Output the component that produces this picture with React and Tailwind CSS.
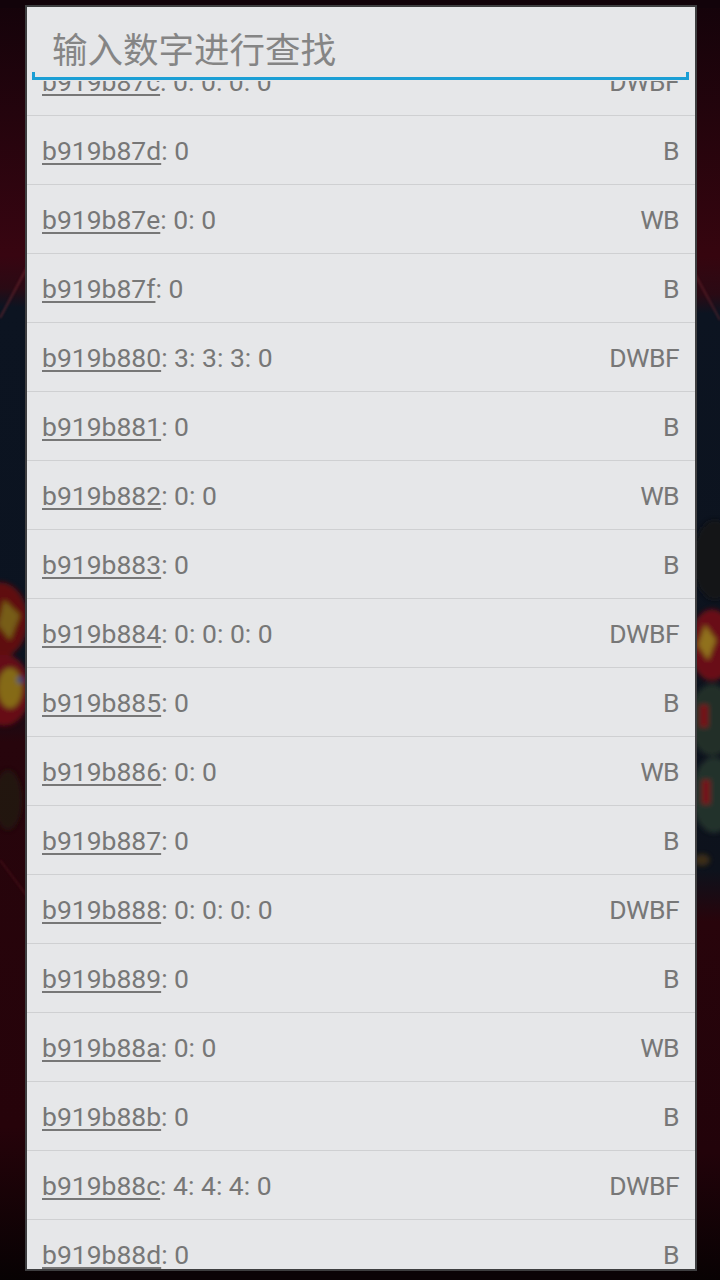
import React from "react";

const rows = [
  ["b919b87c", ": 0: 0: 0: 0", "DWBF"],
  ["b919b87d", ": 0", "B"],
  ["b919b87e", ": 0: 0", "WB"],
  ["b919b87f", ": 0", "B"],
  ["b919b880", ": 3: 3: 3: 0", "DWBF"],
  ["b919b881", ": 0", "B"],
  ["b919b882", ": 0: 0", "WB"],
  ["b919b883", ": 0", "B"],
  ["b919b884", ": 0: 0: 0: 0", "DWBF"],
  ["b919b885", ": 0", "B"],
  ["b919b886", ": 0: 0", "WB"],
  ["b919b887", ": 0", "B"],
  ["b919b888", ": 0: 0: 0: 0", "DWBF"],
  ["b919b889", ": 0", "B"],
  ["b919b88a", ": 0: 0", "WB"],
  ["b919b88b", ": 0", "B"],
  ["b919b88c", ": 4: 4: 4: 0", "DWBF"],
  ["b919b88d", ": 0", "B"],
];

function Background() {
  return (
    <svg
      className="absolute inset-0"
      width="720"
      height="1280"
      viewBox="0 0 720 1280"
    >
      <defs>
        <linearGradient id="lg" x1="0" y1="0" x2="0" y2="1">
          <stop offset="0" stopColor="#14030a" />
          <stop offset="0.2" stopColor="#380511" />
          <stop offset="0.225" stopColor="#2a0a14" />
          <stop offset="0.24" stopColor="#0c1421" />
          <stop offset="0.53" stopColor="#0b1320" />
          <stop offset="0.58" stopColor="#27050c" />
          <stop offset="0.88" stopColor="#26030a" />
          <stop offset="1" stopColor="#070203" />
        </linearGradient>
        <linearGradient id="rg" x1="0" y1="0" x2="0" y2="1">
          <stop offset="0" stopColor="#14030a" />
          <stop offset="0.2" stopColor="#36050f" />
          <stop offset="0.23" stopColor="#2a0a14" />
          <stop offset="0.245" stopColor="#0c1421" />
          <stop offset="0.68" stopColor="#0d121c" />
          <stop offset="0.72" stopColor="#28040b" />
          <stop offset="0.9" stopColor="#22030a" />
          <stop offset="1" stopColor="#080203" />
        </linearGradient>
        <filter id="bl" x="-50%" y="-50%" width="200%" height="200%">
          <feGaussianBlur stdDeviation="2.5" />
        </filter>
        <filter id="bl2" x="-50%" y="-50%" width="200%" height="200%">
          <feGaussianBlur stdDeviation="1.2" />
        </filter>
      </defs>
      <rect x="0" y="0" width="720" height="1280" fill="#0b0306" />
      <rect x="0" y="0" width="40" height="1280" fill="url(#lg)" />
      <rect x="680" y="0" width="40" height="1280" fill="url(#rg)" />
      <rect x="0" y="0" width="720" height="8" fill="#12030a" />
      <line x1="0" y1="318" x2="30" y2="262" stroke="#7a2a32" strokeWidth="2" opacity="0.55" filter="url(#bl2)" />
      <line x1="690" y1="265" x2="720" y2="320" stroke="#7a2a32" strokeWidth="2" opacity="0.45" filter="url(#bl2)" />
      <line x1="0" y1="860" x2="30" y2="900" stroke="#5a1a22" strokeWidth="2" opacity="0.45" filter="url(#bl2)" />
      <g filter="url(#bl)" opacity="0.85">
        <ellipse cx="0" cy="620" rx="28" ry="38" fill="#6e0a10" />
        <path d="M4 600 L20 615 L10 640 L-2 625 Z" fill="#8a6a12" />
        <ellipse cx="4" cy="690" rx="26" ry="36" fill="#750b12" />
        <ellipse cx="10" cy="688" rx="12" ry="20" fill="#9a7a18" />
        <circle cx="20" cy="680" r="3" fill="#2a5a9a" />
        <ellipse cx="8" cy="800" rx="14" ry="30" fill="#1a2418" opacity="0.6" />
      </g>
      <g filter="url(#bl)" opacity="0.85">
        <ellipse cx="715" cy="560" rx="22" ry="40" fill="#141418" />
        <ellipse cx="712" cy="645" rx="22" ry="36" fill="#7a0a12" />
        <path d="M705 625 L716 640 L708 660 L698 645 Z" fill="#a8821a" />
        <ellipse cx="712" cy="720" rx="22" ry="36" fill="#26362c" />
        <rect x="700" y="705" width="8" height="22" fill="#8a1018" />
        <ellipse cx="714" cy="795" rx="22" ry="38" fill="#28382e" />
        <rect x="702" y="780" width="8" height="24" fill="#8a1018" />
        <ellipse cx="702" cy="860" rx="8" ry="6" fill="#6a4a10" opacity="0.6" />
      </g>
    </svg>
  );
}

export default function App() {
  return (
    <div
      className="relative w-[720px] h-[1280px] overflow-hidden"
      style={{ fontFamily: 'Roboto, "Noto Sans CJK SC", sans-serif' }}
    >
      <Background />
      <div className="relative pt-[5px] pl-[25px]">
        <div className="w-[672px] h-[1266px] border-2 border-[#3e3e40] bg-[#e6e7e9] flex flex-col overflow-hidden">
          <div className="h-[74px] shrink-0 pt-[21px]">
            <div
              className="pl-[25px] h-[40px] leading-[40px] text-[35.5px] text-[#858585]"
              style={{ fontFamily: '"Noto Sans CJK SC", sans-serif' }}
            >
              输入数字进行查找
            </div>
            <div className="mt-[4px] ml-[5px] mr-[6px] h-[8px] border-l-[3px] border-r-[3px] border-b-[3px] border-[#1b9fd5]" />
          </div>
          <div className="flex-1 overflow-hidden">
            <div className="mt-[-34px]">
              {rows.map(([addr, vals, flag]) => (
                <div
                  key={addr}
                  className="h-[69px] border-b border-[#cfd0d2] flex items-center justify-between pt-[2px] pl-[15px] pr-[16px] text-[26.5px] text-[#777777]"
                >
                  <div className="whitespace-nowrap">
                    <span className="underline decoration-[2px] underline-offset-[3px]">{addr}</span>
                    <span>{vals}</span>
                  </div>
                  <div className="tracking-[-0.6px]">{flag}</div>
                </div>
              ))}
            </div>
          </div>
        </div>
      </div>
    </div>
  );
}
